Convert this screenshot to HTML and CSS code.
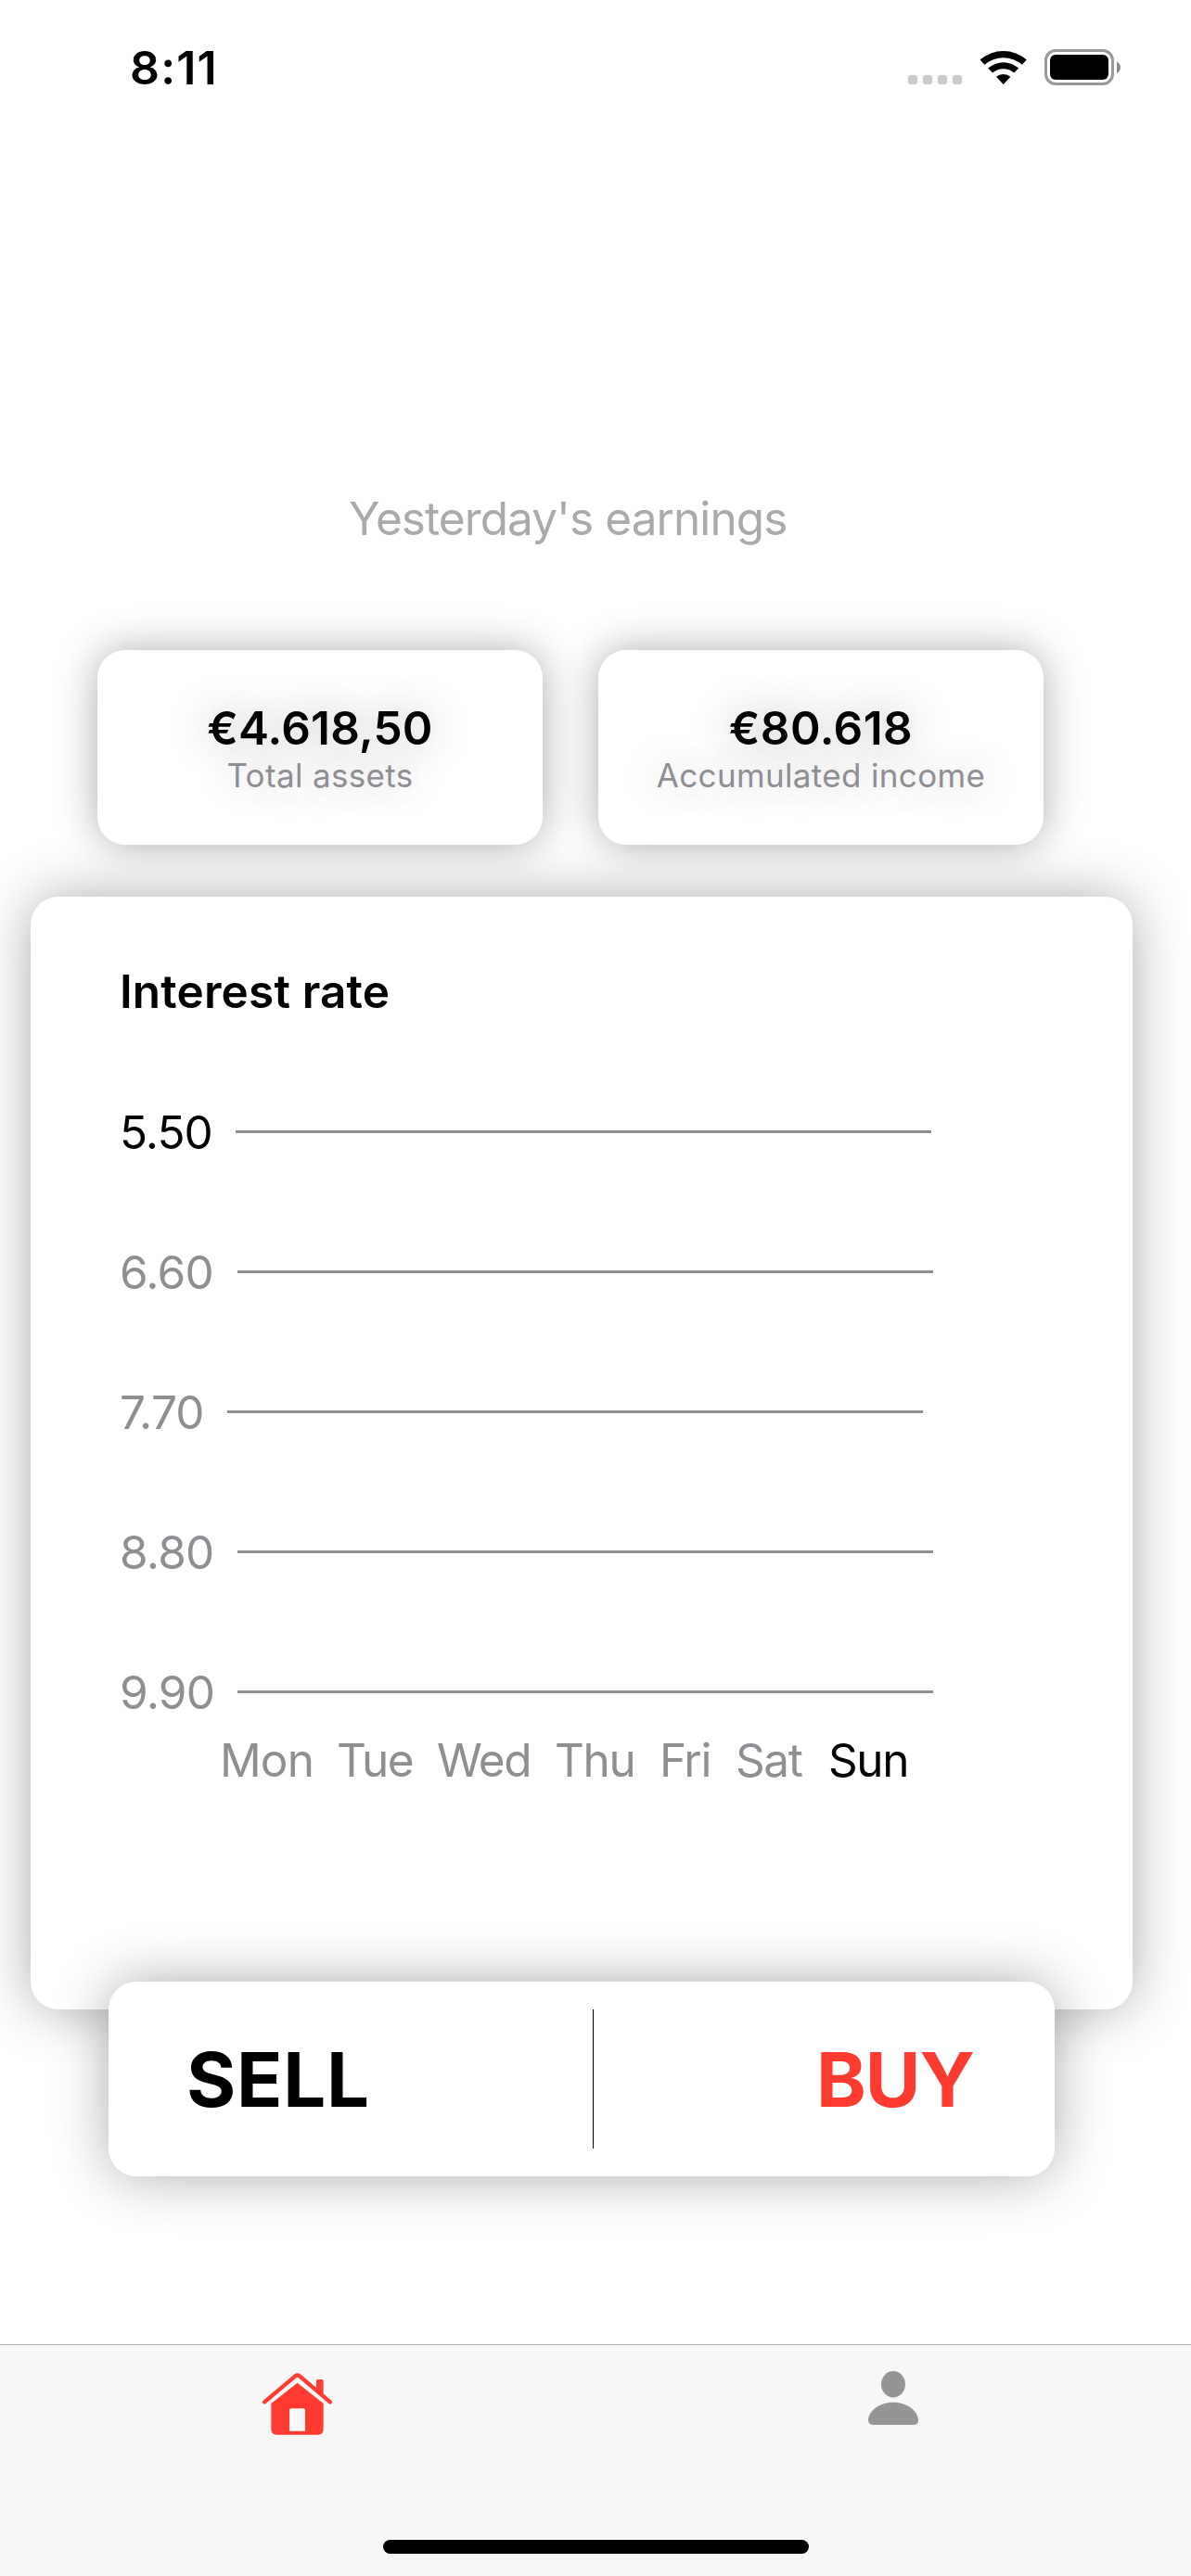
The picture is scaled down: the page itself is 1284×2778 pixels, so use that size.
FILE: index.html
```html
<!DOCTYPE html>
<html lang="en">
<head>
<meta charset="utf-8">
<title>Earnings</title>
<link rel="stylesheet" href="styles.css">
</head>
<body>
<div class="screen">
  <header class="status">
    <span class="time">8:11</span>
    <div class="status-icons">
      <div class="dots"><i></i><i></i><i></i><i></i></div>
      <svg class="wifi" width="52" height="38" viewBox="0 0 52 38">
        <path d="M0.6 10.6A37.5 37.5 0 0 1 50.8 10.6L45.9 15.8A30.5 30.5 0 0 0 5.5 15.8Z"/>
        <path d="M9.2 19.5A25 25 0 0 1 42.2 19.5L37.3 24.6A18 18 0 0 0 14.1 24.6Z"/>
        <path d="M18 28.7A12 12 0 0 1 33.4 28.7L25.7 37Z"/>
      </svg>
      <svg class="battery" width="84" height="40" viewBox="0 0 84 40">
        <rect x="1.5" y="1.5" width="72" height="36" rx="10.5" fill="none" stroke="#999" stroke-width="3"/>
        <rect x="6" y="6" width="63" height="27" rx="6"/>
        <path d="M78 13.3Q82 16 82 19.7Q82 23.400 78 26Z" fill="#8a8a8a"/>
      </svg>
    </div>
  </header>

  <h2 class="heading">Yesterday's earnings</h2>

  <section class="stats">
    <div class="card stat">
      <strong class="stat-value">€4.618,50</strong>
      <span class="stat-label">Total assets</span>
    </div>
    <div class="card stat">
      <strong class="stat-value stat-value-short">€80.618</strong>
      <span class="stat-label">Accumulated income</span>
    </div>
  </section>

  <section class="card chart">
    <h3 class="chart-title">Interest rate</h3>
    <div class="rates">
      <div class="rate rate-first"><span>5.50</span><hr></div>
      <div class="rate"><span>6.60</span><hr></div>
      <div class="rate rate-narrow"><span>7.70</span><hr></div>
      <div class="rate"><span>8.80</span><hr></div>
      <div class="rate"><span>9.90</span><hr></div>
    </div>
    <div class="days">
      <span class="mon">Mon</span><span>Tue</span><span>Wed</span><span>Thu</span><span>Fri</span><span>Sat</span><span class="today">Sun</span>
    </div>
  </section>

  <section class="card actions">
    <span class="sell">SELL</span>
    <div class="divider"></div>
    <span class="buy">BUY</span>
  </section>

  <nav class="tabs">
    <div class="tab tab-home">
      <svg width="75.300" height="67" viewBox="69 177 226 201">
        <g fill="#ff3b30">
          <path d="M243 226V203Q243 198 248 198H261Q266 198 266 203V246Z"/>
          <path fill-rule="evenodd" d="M182 209L266 276V359Q266 377 248 377H115Q97 377 97 359V276ZM162 292Q156 292 156 298V365H207V298Q207 292 201 292Z"/>
        </g>
        <path d="M75.500 271L175 187Q182 181.500 189 187L287.500 271" fill="none" stroke="#ff3b30" stroke-width="13" stroke-linecap="round" stroke-linejoin="round"/>
      </svg>
    </div>
    <div class="tab tab-person">
      <svg width="54" height="58" viewBox="0 0 54 58" fill="#959595">
        <ellipse cx="27" cy="14.300" rx="13" ry="14.200"/>
        <path d="M0 53C0 44 11 33.700 27 33.700S54 44 54 53Q54 58 48 58H6Q0 58 0 53Z"/>
      </svg>
    </div>
    <div class="home-indicator"></div>
  </nav>
</div>
</body>
</html>
```
FILE: styles.css
```css
* { box-sizing: border-box; }

body {
  margin: 0;
  background: #fff;
  font-family: Inter, "Liberation Sans", sans-serif;
  font-size: 49.5px;
  line-height: 60px;
  color: #000;
}

h2, h3, hr { margin: 0; font-weight: 400; font-size: inherit; }

.screen {
  width: 1284px;
  height: 2778px;
  display: flex;
  flex-direction: column;
  overflow: hidden;
}

/* Status bar */
.status {
  height: 134px;
  padding: 43px 74px 0 140px;
  display: flex;
  justify-content: space-between;
  align-items: flex-start;
}

.time { font-size: 50px; font-weight: 600; letter-spacing: 1.17px; }

.status-icons { display: flex; padding-top: 10px; }

.dots { display: flex; gap: 6px; padding-top: 28px; margin-right: 19px; }
.dots i { width: 10px; height: 10px; border-radius: 3px; background: #cbcbcb; }

.wifi { margin: 1px 18px 0 0; }

.battery { display: block; }

/* Earnings */
.heading {
  margin: 395px 0 0 376px;
  color: #aaa;
  letter-spacing: -0.92px;
}

.card {
  background: #fff;
  border-radius: 30px;
  box-shadow: 0 0 60px rgba(0, 0, 0, 0.33);
}

.stats {
  display: flex;
  gap: 60px;
  margin: 112px 0 0 105px;
}

.stat {
  width: 480px;
  height: 210px;
  padding-top: 54px;
  display: flex;
  flex-direction: column;
  align-items: center;
  box-shadow: 0 0 45px rgba(0, 0, 0, 0.33);
  text-shadow: 0 0 45px rgba(0, 0, 0, 0.33);
}

.stat-value { font-weight: 600; letter-spacing: 0.19px; }
.stat-value-short { letter-spacing: 0.47px; }

.stat-label {
  font-size: 35px;
  line-height: 43px;
  letter-spacing: 0.35px;
  color: #8e8e93;
}

/* Chart */
.chart {
  width: 1188px;
  height: 1200px;
  margin: 56px 0 0 33px;
  padding: 72px 0 0 96px;
  flex-shrink: 0;
}

.chart-title { font-weight: 600; letter-spacing: 0.16px; }

.rates {
  display: flex;
  flex-direction: column;
  gap: 91px;
  margin-top: 92px;
}

.rate { display: flex; color: #8e8e93; letter-spacing: -0.75px; }
.rate span { width: 127px; }
.rate-first span { width: 125px; color: #000; letter-spacing: -0.94px; }
.rate-narrow span { width: 116px; }
.rate hr { width: 750px; height: 3px; margin-top: 28px; border: 0; background: #8e8e93; }

.days {
  display: grid;
  grid-template-columns: 126px 108px 127px 113px 82px 100px 100px;
  margin: 13px 0 0 108px;
  color: #8e8e93;
  letter-spacing: -1.4px;
}

.days .mon { letter-spacing: -0.85px; }
.days .today { color: #000; }

/* Trade buttons */
.actions {
  position: relative;
  display: grid;
  grid-template-columns: 522px 1px 1fr;
  align-items: center;
  width: 1020px;
  height: 210px;
  margin: -30px 0 0 117px;
  font-size: 81.5px;
  font-weight: 700;
  line-height: 99px;
  flex-shrink: 0;
}

.sell { padding-left: 84px; letter-spacing: 0.7px; }
.divider { height: 150px; background: #000; }
.buy { padding-right: 87px; text-align: right; color: #ff3b30; letter-spacing: -1.04px; }

/* Tab bar */
.tabs {
  position: relative;
  display: flex;
  height: 250px;
  margin-top: auto;
  border-top: 1px solid #b0b0b0;
  background: #f7f7f7;
}

.tab { flex: 1; display: flex; justify-content: center; align-items: flex-start; }
.tab-home { padding-top: 30px; }
.tab-person { padding-top: 28px; }

.home-indicator {
  position: absolute;
  left: 413px;
  bottom: 24px;
  width: 459px;
  height: 15px;
  border-radius: 8px;
  background: #000;
}
```
